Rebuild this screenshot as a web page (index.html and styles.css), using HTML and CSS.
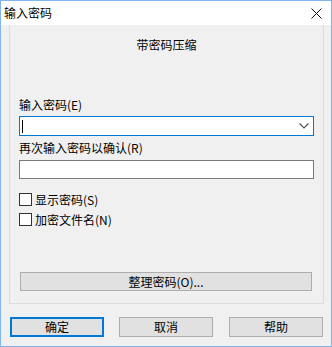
FILE: index.html
```html
<!DOCTYPE html>
<html>
<head>
<meta charset="utf-8">
<link rel="stylesheet" href="styles.css">
</head>
<body>
<div class="window">
  <div class="titlebar">
    <span class="title">输入密码</span>
    <svg class="close" width="11" height="11" viewBox="0 0 11 11"><path d="M0.5 0.5 L10.5 10.5 M10.5 0.5 L0.5 10.5" stroke="#111" stroke-width="1" fill="none"/></svg>
  </div>
  <div class="panel">
    <div class="heading">带密码压缩</div>
    <div class="label label-first">输入密码(E)</div>
    <div class="combo">
      <span class="caret"></span>
      <svg class="chevron" width="10" height="6" viewBox="0 0 10 6"><path d="M0.5 0.5 L5 5 L9.5 0.5" stroke="#555" stroke-width="1.2" fill="none"/></svg>
    </div>
    <div class="label label-second">再次输入密码以确认(R)</div>
    <div class="input"></div>
    <div class="check check-first"><span class="box"></span><span>显示密码(S)</span></div>
    <div class="check check-second"><span class="box"></span><span>加密文件名(N)</span></div>
    <div class="button wide">整理密码(O)...</div>
  </div>
  <div class="actions">
    <div class="button primary">确定</div>
    <div class="button">取消</div>
    <div class="button last">帮助</div>
  </div>
</div>
</body>
</html>
```
FILE: styles.css
```css
* { box-sizing: border-box; }
html, body { margin: 0; padding: 0; }
body {
  width: 332px;
  height: 347px;
  font-family: "Noto Sans CJK SC", "Noto Sans", sans-serif;
  font-size: 12px;
  color: #000;
  background: #f0f0f0;
}
.window {
  width: 332px;
  height: 347px;
  border: 1px solid #80b6ec;
  background: #f0f0f0;
  display: flex;
  flex-direction: column;
}
.titlebar {
  height: 24px;
  background: #fff;
  display: flex;
  align-items: center;
  justify-content: space-between;
  padding: 0 9px 0 3px;
  flex-shrink: 0;
}
.title { line-height: 16px; }
.close { display: block; }
.panel {
  margin-left: 8px;
  margin-right: 7px;
  height: 279px;
  border: 1px solid #dcdcdc;
  border-top: none;
  display: flex;
  flex-direction: column;
  padding: 0 9px 0 9px;
  flex-shrink: 0;
}
.heading {
  text-align: center;
  line-height: 16px;
  margin-top: 12px;
}
.label { line-height: 16px; }
.label-first { margin-top: 44px; }
.label-second { margin-top: 4px; }
.combo {
  margin-top: 3px;
  height: 20px;
  background: #fff;
  border: 1px solid #0078d7;
  display: flex;
  align-items: center;
  justify-content: space-between;
  padding: 0 4px 0 2px;
}
.caret {
  width: 1px;
  height: 13px;
  background: #000;
}
.chevron { display: block; }
.input {
  margin-top: 4px;
  height: 19px;
  background: #fff;
  border: 1px solid #7a7a7a;
}
.check {
  display: flex;
  align-items: center;
  height: 13px;
  line-height: 13px;
  gap: 3px;
}
.check-first { margin-top: 14px; }
.check-second { margin-top: 7px; }
.box {
  width: 13px;
  height: 13px;
  background: #fff;
  border: 1px solid #333;
  flex-shrink: 0;
}
.button {
  height: 19px;
  background: #e1e1e1;
  border: 1px solid #adadad;
  display: flex;
  align-items: center;
  justify-content: center;
  line-height: 16px;
}
.wide {
  margin-top: 46px;
  margin-left: 1px;
  margin-right: 2px;
}
.actions {
  display: flex;
  margin-top: 13px;
  padding-left: 9px;
  gap: 15px;
}
.actions .button {
  width: 94px;
  height: 20px;
}
.actions .button.last { margin-left: 1px; }
.primary {
  border: 2px solid #0078d7;
}
```
